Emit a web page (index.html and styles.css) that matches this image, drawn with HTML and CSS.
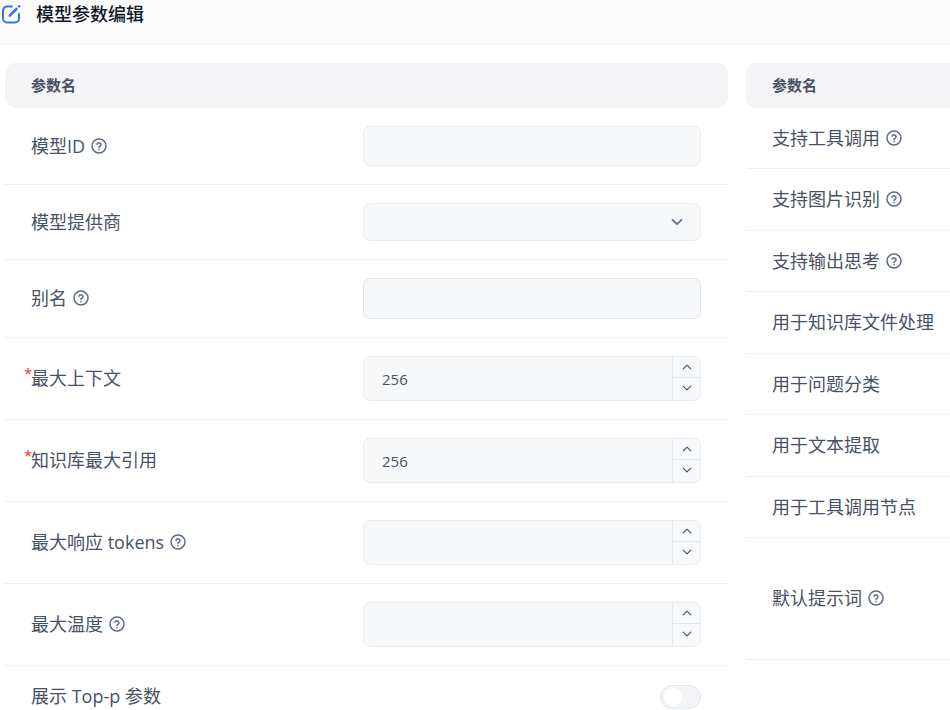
FILE: index.html
```html
<!DOCTYPE html>
<html lang="zh-CN">
<head>
    <meta charset="UTF-8">
    <title>模型参数编辑</title>
    <link rel="stylesheet" href="styles.css">
</head>
<body>
<svg class="symbols" aria-hidden="true">
    <symbol id="help" viewBox="0 0 16 16">
        <circle cx="8" cy="8" r="7"/>
        <path d="M6 6.3a2.05 2.05 0 0 1 4 .6c0 1.3-2 1.7-2 2.6"/>
        <path d="M8 11.6v.1"/>
    </symbol>
    <symbol id="down" viewBox="0 0 12 12">
        <path d="M1.5 3.8 6 8.2l4.500-4.400"/>
    </symbol>
    <symbol id="up" viewBox="0 0 12 12">
        <path d="M1.500 8.200 6 3.800l4.500 4.400"/>
    </symbol>
</svg>
<form class="panel">
    <header class="panel_header">
        <svg class="edit_icon" viewBox="0 0 20 20">
            <path d="M11 2.500H6A4 4 0 0 0 2 6.500v8A4 4 0 0 0 6 18.500h8A4 4 0 0 0 18 14.500V10"/>
            <path class="edit_pen" d="M8.800 11.600 15.400 5"/>
            <path class="edit_pen" d="m18 2.400.1-.1"/>
        </svg>
        <h1 class="panel_title">模型参数编辑</h1>
    </header>
    <div class="panel_body">
        <table class="param_table">
            <thead>
            <tr>
                <th>参数名</th>
                <th class="control_col"></th>
            </tr>
            </thead>
            <tbody>
            <tr>
                <td><div class="name"><label for="model">模型ID</label><svg class="help_icon"><use href="#help"/></svg></div></td>
                <td><input id="model" class="field" type="text"></td>
            </tr>
            <tr>
                <td><div class="name"><label for="provider">模型提供商</label></div></td>
                <td>
                    <div class="select_wrap">
                        <select id="provider" class="field field_select"><option></option></select>
                        <svg class="select_arrow"><use href="#down"/></svg>
                    </div>
                </td>
            </tr>
            <tr>
                <td><div class="name"><label for="alias">别名</label><svg class="help_icon"><use href="#help"/></svg></div></td>
                <td><input id="alias" class="field field_alias" type="text"></td>
            </tr>
            <tr>
                <td><div class="name"><label class="required" for="context">最大上下文</label></div></td>
                <td>
                    <div class="number">
                        <input id="context" type="number" value="256">
                        <div class="stepper">
                            <button type="button" aria-label="增加"><svg><use href="#up"/></svg></button>
                            <button type="button" aria-label="减少"><svg><use href="#down"/></svg></button>
                        </div>
                    </div>
                </td>
            </tr>
            <tr>
                <td><div class="name"><label class="required" for="quote">知识库最大引用</label></div></td>
                <td>
                    <div class="number">
                        <input id="quote" type="number" value="256">
                        <div class="stepper">
                            <button type="button" aria-label="增加"><svg><use href="#up"/></svg></button>
                            <button type="button" aria-label="减少"><svg><use href="#down"/></svg></button>
                        </div>
                    </div>
                </td>
            </tr>
            <tr>
                <td><div class="name"><label for="response">最大响应 tokens</label><svg class="help_icon"><use href="#help"/></svg></div></td>
                <td>
                    <div class="number">
                        <input id="response" type="number">
                        <div class="stepper">
                            <button type="button" aria-label="增加"><svg><use href="#up"/></svg></button>
                            <button type="button" aria-label="减少"><svg><use href="#down"/></svg></button>
                        </div>
                    </div>
                </td>
            </tr>
            <tr>
                <td><div class="name"><label for="temperature">最大温度</label><svg class="help_icon"><use href="#help"/></svg></div></td>
                <td>
                    <div class="number">
                        <input id="temperature" type="number">
                        <div class="stepper">
                            <button type="button" aria-label="增加"><svg><use href="#up"/></svg></button>
                            <button type="button" aria-label="减少"><svg><use href="#down"/></svg></button>
                        </div>
                    </div>
                </td>
            </tr>
            <tr>
                <td><div class="name"><label for="top_p">展示 Top-p 参数</label></div></td>
                <td><input id="top_p" class="switch" type="checkbox"></td>
            </tr>
            </tbody>
        </table>
        <table class="param_table feature_table">
            <thead>
            <tr>
                <th>参数名</th>
            </tr>
            </thead>
            <tbody>
            <tr><td><div class="name">支持工具调用<svg class="help_icon"><use href="#help"/></svg></div></td></tr>
            <tr><td><div class="name">支持图片识别<svg class="help_icon"><use href="#help"/></svg></div></td></tr>
            <tr><td><div class="name">支持输出思考<svg class="help_icon"><use href="#help"/></svg></div></td></tr>
            <tr><td><div class="name">用于知识库文件处理</div></td></tr>
            <tr><td><div class="name">用于问题分类</div></td></tr>
            <tr><td><div class="name">用于文本提取</div></td></tr>
            <tr><td><div class="name">用于工具调用节点</div></td></tr>
            <tr class="prompt_row"><td><div class="name">默认提示词<svg class="help_icon"><use href="#help"/></svg></div></td></tr>
            </tbody>
        </table>
    </div>
</form>
</body>
</html>
```

FILE: styles.css
```css
* {
    box-sizing: border-box;
}

body {
    margin: 0;
    background: #fff;
    color: #485264;
    font-family: "Open Sans", "Noto Sans CJK SC", sans-serif;
    font-size: 18px;
    line-height: 24px;
}

svg {
    fill: none;
    stroke: currentColor;
    stroke-linecap: round;
    stroke-linejoin: round;
}

.symbols {
    display: none;
}

.panel {
    height: 100vh;
    overflow: hidden;
}

/* header */
.panel_header {
    display: flex;
    align-items: center;
    gap: 15px;
    height: 45px;
    padding: 0 0 16px 1px;
    background: #fbfbfc;
    border-bottom: 1px solid #f4f4f7;
}

.edit_icon {
    width: 20px;
    height: 20px;
    color: #3370ff;
    stroke-width: 2;
}

.edit_icon .edit_pen {
    stroke-width: 2.6;
}

.panel_title {
    margin: 0;
    color: #111824;
    font-size: 18px;
    font-weight: 500;
}

/* tables */
.panel_body {
    display: grid;
    grid-template-columns: minmax(0, 1fr) 204px;
    gap: 18px;
    align-items: start;
    padding: 18px 0 0 5px;
}

.param_table {
    width: 100%;
    border-spacing: 0;
}

.param_table th {
    height: 45px;
    padding: 0 26px 2px;
    background: #f4f4f7;
    font-size: 15px;
    font-weight: 700;
    text-align: left;
}

.param_table th:first-child {
    border-radius: 10px 0 0 10px;
}

.param_table .control_col {
    width: 392px;
    border-radius: 0 10px 10px 0;
}

.param_table td {
    padding: 18px 27px 18px 26px;
    border-bottom: 1px solid #eef0f3;
}

.param_table td + td {
    padding-left: 27px;
}

.feature_table td {
    height: 61px;
    padding: 0 0 0 26px;
}

.feature_table tr:nth-child(even) td {
    height: 62px;
}

.feature_table tr.prompt_row:last-child td {
    height: 122px;
}

.name {
    display: flex;
    align-items: center;
    gap: 6px;
    padding-bottom: 1px;
    white-space: nowrap;
}

.help_icon {
    width: 16px;
    height: 16px;
    color: #5f6b81;
    stroke-width: 1.5;
}

.required {
    position: relative;
}

.required::before {
    content: "*";
    position: absolute;
    left: -7px;
    top: -5px;
    color: #e5382b;
    font-size: 15px;
}

/* fields */
.field,
.number {
    display: block;
    width: 100%;
    height: 40px;
    padding: 0 18px;
    border: 1px solid #e8ebf0;
    border-radius: 7px;
    background: #f7f8fa;
    color: inherit;
    font: inherit;
    font-size: 15px;
}

.field_select {
    height: 38px;
    appearance: none;
}

.field_alias {
    height: 41px;
    border-color: #e2e7f2;
}

.select_wrap {
    position: relative;
}

.select_arrow {
    position: absolute;
    top: 13px;
    right: 18px;
    width: 12px;
    height: 12px;
    color: #667085;
    stroke-width: 1.8;
    pointer-events: none;
}

.number {
    display: flex;
    height: 45px;
    padding: 0;
    overflow: hidden;
}

.number input {
    flex: 1;
    min-width: 0;
    padding: 0 18px;
    border: 0;
    background: none;
    color: inherit;
    font: inherit;
    appearance: textfield;
}

.number input::-webkit-inner-spin-button {
    display: none;
}

.stepper {
    display: flex;
    flex-direction: column;
    width: 28px;
    padding-bottom: 2px;
    border-left: 1px solid #e2e8f0;
}

.stepper button {
    display: flex;
    flex: 1;
    align-items: center;
    justify-content: center;
    padding: 0;
    border: 0;
    background: none;
    color: #485264;
}

.stepper button + button {
    border-top: 1px solid #e2e8f0;
}

.stepper svg {
    width: 10px;
    height: 10px;
    stroke-width: 1.4;
}

.switch {
    display: block;
    width: 41px;
    height: 24px;
    margin: 0 0 0 auto;
    padding: 2px 3px;
    appearance: none;
    border: 1px solid #e2e8f0;
    border-radius: 12px;
    background: #f4f4f7;
}

.switch::before {
    content: "";
    display: block;
    width: 18px;
    height: 18px;
    border-radius: 50%;
    background: #fff;
}

.switch:checked {
    background: #3370ff;
}

.switch:checked::before {
    margin-left: auto;
}
```
